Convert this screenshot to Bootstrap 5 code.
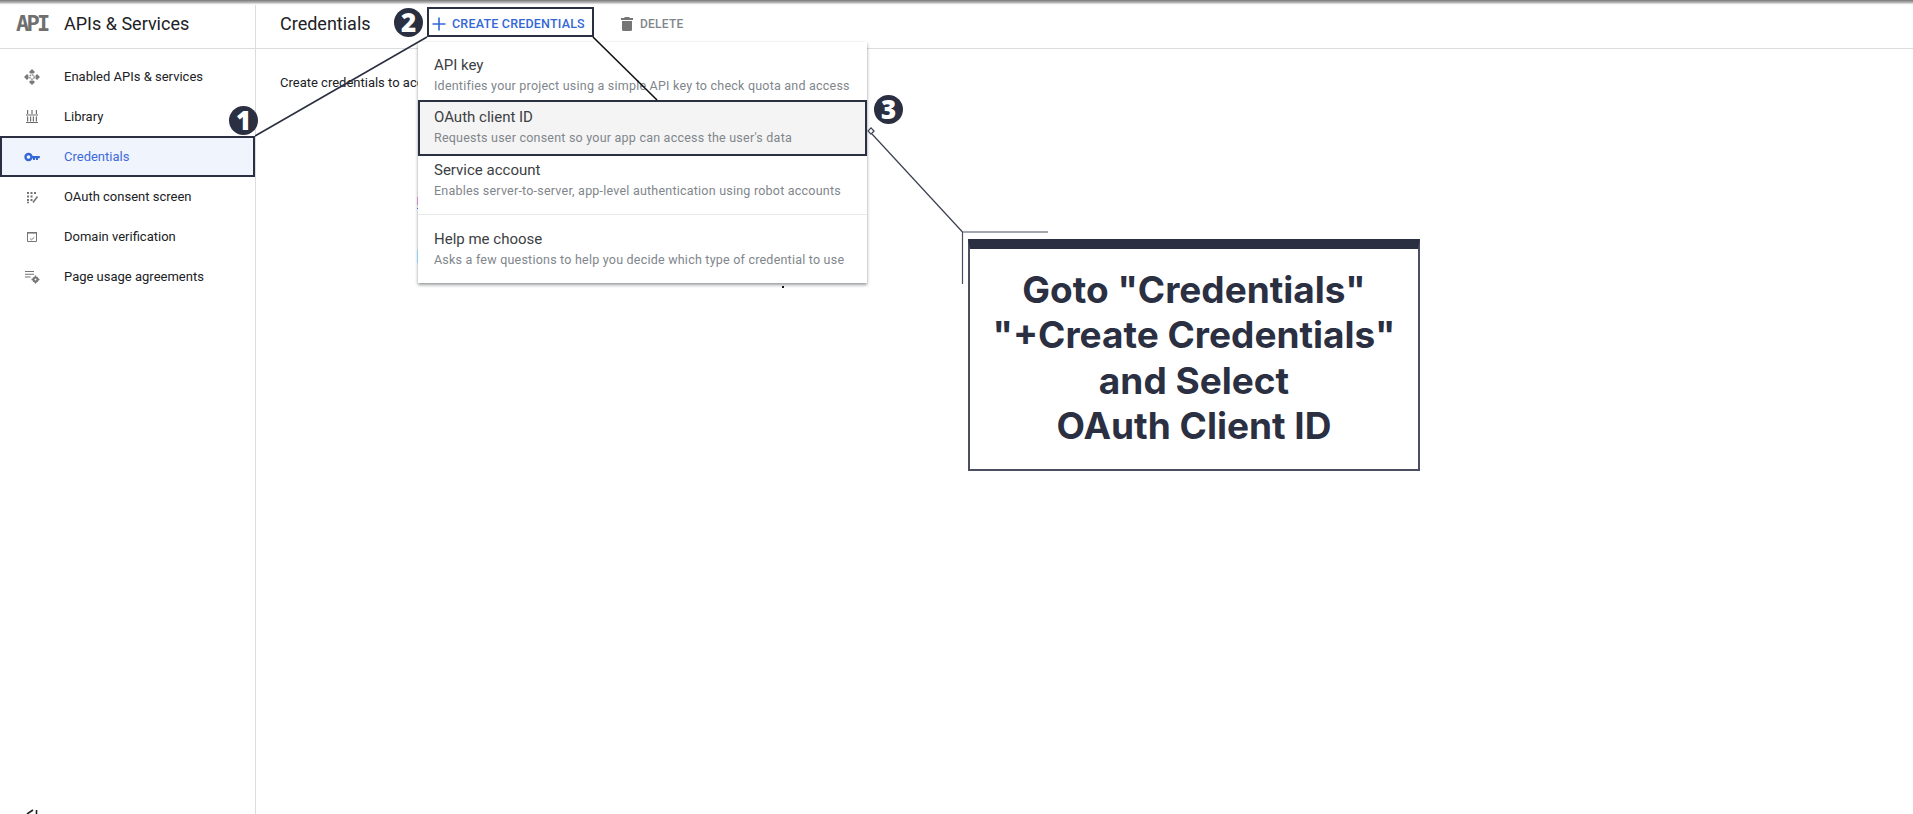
<!DOCTYPE html>
<html lang="en">
<head>
<meta charset="utf-8">
<title>Credentials</title>
<link rel="stylesheet" href="https://cdn.jsdelivr.net/npm/bootstrap@5.3.0/dist/css/bootstrap.min.css">
<style>
html,body{height:814px;overflow:hidden;background:#fff;}
body{font-family:Roboto,"Liberation Sans",sans-serif;font-size:13px;color:#202124;}
.shell{position:relative;width:1913px;height:814px;overflow:hidden;}
.topedge{height:5px;background:linear-gradient(#777,#b5b5b5 50%,#f4f4f4 85%,#fff);}
.headrow{height:44px;border-bottom:1px solid #dadce0;padding-bottom:0;}
.brand{width:256px;border-right:1px solid #dadce0;padding:0 0 6px 16px;}
.apimark{width:48px;flex:none;font-family:"DejaVu Sans Mono",monospace;font-weight:700;font-size:22px;letter-spacing:-2.800px;color:#6f6f6f;line-height:1;}
.brandname{font-size:18px;color:#202124;}
.toolrow{padding-bottom:6px;}
.pagetitle{font-size:18px;color:#202124;margin-left:24px;width:91px;}
.makebtn{margin-left:56px;width:167px;height:30px;margin-top:-3px;border:2px solid #2b2f42;border-radius:0;padding:4px 0 0 3px;font-size:12.500px;font-weight:500;letter-spacing:.2px;color:#3367d6;background:#fff;gap:6px;}
.makebtn:hover{color:#3367d6;border-color:#2b2f42;background:#fff;}
.delbtn{margin-left:26px;padding:0;border:0;border-radius:0;font-size:12px;font-weight:500;letter-spacing:.25px;color:#80868b;gap:6px;}
.bodyrow{height:765px;}
.sidebar{width:256px;border-right:1px solid #dadce0;padding-top:8px;}
.navrow{height:40px;padding:0 0 0 24px;color:#202124;text-decoration:none;font-size:13px;}
.navrow svg{width:16px;height:16px;margin-right:24px;flex:none;}
.navrow.current{height:41px;margin-top:-1px;background:#eff4fd;color:#3f6ad8;border:2px solid #2b2f42;padding:1px 0 0 22px;}
.contentpane{padding:24px 0 0 24px;font-size:13px;color:#202124;line-height:20px;}
.clipline{display:block;width:138px;overflow:hidden;white-space:nowrap;}
.credmenu.dropdown-menu{display:block;position:absolute;left:418px;top:42px;width:449px;height:241px;margin:0;padding:6px 0 0;border:0;border-radius:0;box-shadow:0 2px 3px rgba(60,64,67,.5),0 0 2px rgba(60,64,67,.08);z-index:5;}
.credmenu .dropdown-item{height:52px;padding:6.500px 16px 0;white-space:nowrap;}
.credmenu .dropdown-item.picked{height:56px;background:#f4f4f4;border:2px solid #2b2f42;padding:4.500px 14px 0;}
.credmenu .dropdown-item.afterpick{margin-top:-4px;padding-top:7.500px;}
.itemname{display:block;font-size:15px;line-height:21px;color:#3c4043;}
.itemnote{display:block;font-size:12.500px;line-height:20px;letter-spacing:.22px;color:#80868b;}
.credmenu .dropdown-divider{margin:10px 0 7px;border-color:#e8eaed;opacity:1;}
.marks{position:absolute;left:0;top:0;width:1913px;height:814px;z-index:8;pointer-events:none;}
.stepdot{position:absolute;width:29px;height:29px;border-radius:50%;background:#2b2f42;color:#fff;font-family:"Open Sans",sans-serif;font-weight:800;font-size:26px;line-height:29px;text-align:center;z-index:9;}
.callout{position:absolute;left:968px;top:239px;width:452px;height:232px;border:2px solid #4a4e60;border-top:10px solid #2b2f42;background:#fff;color:#2b2f42;font-family:Inter,"Liberation Sans",sans-serif;font-weight:700;font-size:37px;line-height:45.400px;text-align:center;padding-top:18px;z-index:7;}
</style>
</head>
<body>
<div class="shell">
  <div class="topedge"></div>
  <div class="headrow d-flex align-items-stretch">
    <div class="brand d-flex align-items-center">
      <span class="apimark">API</span>
      <span class="brandname">APIs &amp; Services</span>
    </div>
    <div class="toolrow d-flex align-items-center flex-grow-1">
      <span class="pagetitle">Credentials</span>
      <button type="button" class="btn makebtn d-flex align-items-center">
        <svg width="14" height="14" viewBox="0 0 14 14"><path d="M6.200 0.500h1.600v5.700h5.700v1.600H7.800v5.700H6.200V7.800H0.500V6.200h5.700z" fill="#3367d6"/></svg>
        CREATE CREDENTIALS
      </button>
      <button type="button" class="btn delbtn d-flex align-items-center">
        <svg width="14" height="14" viewBox="0 0 14 14"><path d="M5 0h4l1 1h3v2H1V1h3zM2 4h10v8.500a1.500 1.500 0 0 1-1.500 1.500h-7A1.500 1.500 0 0 1 2 12.500z" fill="#757575"/></svg>
        DELETE
      </button>
    </div>
  </div>
  <div class="bodyrow d-flex">
    <nav class="sidebar d-flex flex-column">
      <a class="navrow d-flex align-items-center" href="#">
        <svg viewBox="0 0 16 16" fill="#7a7a7a"><path d="M8 0l3 3-1.500 1.500h-3L5 3zM8 16l-3-3 1.500-1.500h3L11 13zM0 8l3-3 1.500 1.500v3L3 11zM16 8l-3 3-1.500-1.500v-3L13 5z"/><circle cx="8" cy="8" r="2.200" fill="none" stroke="#8a8a8a" stroke-width="1.300" stroke-dasharray="1.700 .6"/></svg>
        Enabled APIs &amp; services
      </a>
      <a class="navrow d-flex align-items-center" href="#">
        <svg viewBox="0 0 16 16" fill="#6f6f6f"><path d="M3 1h1.200v4H3zM7.400 1h1.200v4H7.400zM11.800 1H13v4h-1.200zM2 5.500h12v1.100H2zM3 7.500h1.200v5H3zM6 7.500h1.200v5H6zM8.800 7.500H10v5H8.800zM11.800 7.500H13v5h-1.200zM2 13h12v1.100H2z"/></svg>
        Library
      </a>
      <a class="navrow current d-flex align-items-center" href="#">
        <svg viewBox="0 0 16 16"><circle cx="4.500" cy="8" r="3" fill="none" stroke="#3367d6" stroke-width="2.400"/><path d="M7 7h8.800v2.200H14V11h-2V9.200h-1V11H9V9.200H7z" fill="#3367d6"/></svg>
        Credentials
      </a>
      <a class="navrow d-flex align-items-center" href="#">
        <svg viewBox="0 0 16 16" fill="#757575"><path d="M3 3h2v2H3zM6.500 3h2v2h-2zM10 3h2v2h-2zM3 6.500h2v2H3zM6.500 6.500h2v2h-2zM3 10h2v2H3zM3 12.800h2v1.500H3zM6.500 10h2v2h-2z"/><path d="M9 13.500l4.500-6" stroke="#757575" stroke-width="1.500" fill="none"/></svg>
        OAuth consent screen
      </a>
      <a class="navrow d-flex align-items-center" href="#">
        <svg viewBox="0 0 16 16"><path d="M3.500 3.500h9v9h-9z" fill="none" stroke="#757575" stroke-width="1"/><path d="M3 3h10v1.600H3z" fill="#757575"/><path d="M6 9.500l1.500 1.300 2.800-2.500" fill="none" stroke="#757575" stroke-width="1"/></svg>
        Domain verification
      </a>
      <a class="navrow d-flex align-items-center" href="#">
        <svg viewBox="0 0 16 16" fill="#757575"><path d="M1 2h9v1.100H1zM1 4.700h9v1.100H1zM1 7.400h5.500v1.100H1z"/><circle cx="11.500" cy="10.500" r="2" fill="none" stroke="#757575" stroke-width="2.200"/><path d="M10.800 6.500h1.400V8h-1.400zM10.800 13h1.400v1.500h-1.400zM7.500 9.800H9v1.400H7.500zM14 9.800h1.500v1.400H14z"/></svg>
        Page usage agreements
      </a>
    </nav>
    <main class="contentpane flex-grow-1"><span class="clipline">Create credentials to acc</span></main>
  </div>

  <div class="dropdown-menu credmenu show">
    <a class="dropdown-item" href="#"><span class="itemname">API key</span><span class="itemnote">Identifies your project using a simple API key to check quota and access</span></a>
    <a class="dropdown-item picked" href="#"><span class="itemname">OAuth client ID</span><span class="itemnote">Requests user consent so your app can access the user's data</span></a>
    <a class="dropdown-item afterpick" href="#"><span class="itemname">Service account</span><span class="itemnote">Enables server-to-server, app-level authentication using robot accounts</span></a>
    <hr class="dropdown-divider">
    <a class="dropdown-item" href="#"><span class="itemname">Help me choose</span><span class="itemnote">Asks a few questions to help you decide which type of credential to use</span></a>
  </div>

  <svg class="marks" viewBox="0 0 1913 814">
    <path d="M255 136L427 37" stroke="#2b2f42" stroke-width="1.600" fill="none"/>
    <path d="M593 37L657 100" stroke="#111" stroke-width="1.600" fill="none"/>
    <path d="M872 134L962.500 232" stroke="#3a3e50" stroke-width="1.200" fill="none"/>
    <path d="M874 131l-3 3.200-3-3.200 3-3.200z" fill="#fff" stroke="#3a3e50" stroke-width="1.200"/>
    <path d="M962 232h86M962.500 232v52" stroke="#4a4e60" stroke-width="1.200" fill="none"/>
    <path d="M417 197h1v8h-1z" fill="#c58ac0"/>
    <path d="M417 208h1v1h-1z" fill="#3367d6"/>
    <path d="M417 250h1v13h-1z" fill="#8fd0ee"/>
    <path d="M782 286h2v2h-2z" fill="#111"/>
    <path d="M33 810l-6 4M36.500 810v4" stroke="#202124" stroke-width="1.600" fill="none"/>
  </svg>
  <span class="stepdot" style="left:229px;top:106px">1</span>
  <span class="stepdot" style="left:394px;top:8px">2</span>
  <span class="stepdot" style="left:874px;top:95px">3</span>

  <div class="callout">Goto "Credentials"<br>"+Create Credentials"<br>and Select<br>OAuth Client ID</div>
</div>
<script src="https://cdn.jsdelivr.net/npm/bootstrap@5.3.0/dist/js/bootstrap.bundle.min.js"></script>
</body>
</html>
